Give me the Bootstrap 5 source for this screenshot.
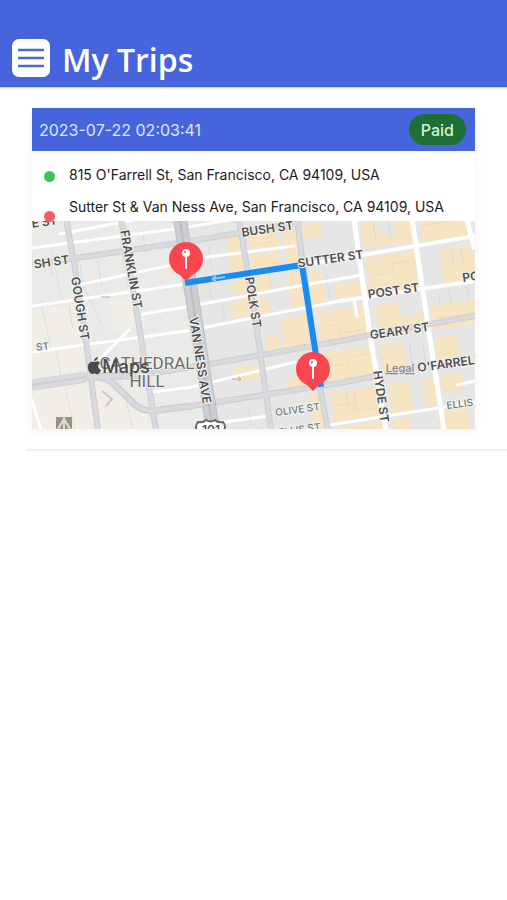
<!DOCTYPE html>
<html lang="en">
<head>
<meta charset="utf-8">
<meta name="viewport" content="width=device-width, initial-scale=1">
<title>My Trips</title>
<link href="https://cdn.jsdelivr.net/npm/bootstrap@5.3.0/dist/css/bootstrap.min.css" rel="stylesheet">
<style>
  body { font-family: Inter, "Liberation Sans", sans-serif; background: #fff; color: #1c1c1e; }
  .app-bar { background: #4664dc; padding: 36px 12px 7px; box-shadow: 0 1px 1px rgba(70,100,220,.3); }
  .app-title { font-family: "Open Sans", "Noto Sans", sans-serif; font-weight: 600; font-size: 32px; line-height: 44px; color: #fff; padding-left: 12px; padding-top: 2px; height: 44px; }
  .menu-btn { width: 38px; height: 38px; border-radius: 7px; background: #fff; }
  .trip { margin: 21px 32px 20px; border-radius: 0; box-shadow: 0 2px 10px rgba(0,0,0,.05); }
  .trip-head { background: #4664dc; color: #dfe7ff; font-size: 16px; height: 43px; padding: 0 9px 0 7px; }
  .paid { background: #1f6e35; color: #d4f3d8; font-size: 16px; font-weight: 500; line-height: 24px; padding: 4px 12px 3px; }
  .stops { font-size: 14px; line-height: 16px; height: 70px; padding: 16px 12px 0; }
  .stop { gap: 14px; height: 32px; }
  .dot { width: 11px; height: 11px; margin-top: 4px; }
  .dot-from { background: #3cc45c; }
  .dot-to { background: #f4605f; margin-top: 12px; }
  .trip-map { aspect-ratio: 443 / 208; }
  .trip-map text { font-family: Inter, "Liberation Sans", sans-serif; text-anchor: middle; fill: #505052; font-size: 12px; font-weight: 600; }
  .halo text { stroke: #f3f2ef; stroke-width: 2px; paint-order: stroke; }
  .trip-map text.minor { font-size: 10px; font-weight: 500; fill: #77777a; }
  .trip-map text.area { font-size: 17px; font-weight: 400; fill: #6b6b6d; font-family: Roboto, sans-serif; }
  .trip-map text.brand { font-size: 18px; font-weight: 500; fill: #4a4a4c; }
  .trip-map text.legal { font-size: 11px; font-weight: 500; fill: #858588; text-decoration: underline; }
  .trip-rule { margin: 0 0 0 26px; border-top: 2px solid #f0f0f1; opacity: 1; }
</style>
<script src="https://cdn.jsdelivr.net/npm/bootstrap@5.3.0/dist/js/bootstrap.bundle.min.js"></script>
</head>
<body>
<header class="app-bar d-flex align-items-center">
  <button type="button" class="menu-btn btn border-0 p-0 d-flex align-items-center justify-content-center" aria-label="Menu">
    <svg width="26" height="20" viewBox="0 0 26 20" stroke="#4a69c8" stroke-width="2.4" aria-hidden="true"><path d="M0 2h26M0 10h26M0 18h26"/></svg>
  </button>
  <h1 class="app-title mb-0">My Trips</h1>
</header>
<main>
  <article class="trip card border-0">
    <div class="trip-head d-flex align-items-center justify-content-between">
      <time datetime="2023-07-22T02:03:41">2023-07-22 02:03:41</time>
      <span class="paid rounded-pill">Paid</span>
    </div>
    <div class="stops">
      <div class="stop d-flex align-items-start"><span class="dot dot-from rounded-circle flex-shrink-0"></span><span>815 O'Farrell St, San Francisco, CA 94109, USA</span></div>
      <div class="stop d-flex align-items-start"><span class="dot dot-to rounded-circle flex-shrink-0 position-relative z-1"></span><span>Sutter St &amp; Van Ness Ave, San Francisco, CA 94109, USA</span></div>
    </div>
    <svg class="trip-map w-100 d-block" viewBox="32 221 443 208" preserveAspectRatio="xMidYMid slice" role="img" aria-label="Trip route map">
      <rect x="32" y="221" width="443" height="208" fill="#e6e6e7"/>
      <path d="M32 221H180L212 430H32z" fill="#eaeae9"/>
      <path d="M32 310l50-8 12 70-62 10zM110 300l30-4 6 30-32 5zM32 388l60-8 30 10 22 22 12 18H32z" fill="#f0eee6"/>
      <!-- building blocks, laid out on the street grid -->
      <g transform="matrix(1 -.145 .155 1 240 221)" fill="#f6e4c3">
        <path d="M-76 27h16v15h-16zM-67 47h16v14h-16zM-16 14h16v35h-16zM5 15h30v15H5zM5 35h28v15H5zM-18 57h16v15h-16zM-22 78h18v16h-18zM5 57h16v15H5zM5 78h12v16H5zM38 57h16v37H38zM24 -5h25v12H24zM40 14h14v35H40z"/>
        <path d="M60 13h18v14H60zM60 60h12v32H60zM82 76h29v17H82zM62 100h49v34H62zM24 102h30v32H24zM8 116h12v17H8zM-28 143h26v15h-26zM36 139h18v14H36zM22 160h32v12H22zM62 141h46v30H62zM40 181h15v28H40z"/>
        <path d="M118 17h16v28h-16zM117 33h50v12h-50zM151 16h17v28h-17zM176 17h48v32h-48zM117 54h51v38h-51zM190 56h34v36h-34zM119 102h24v31h-24zM145 116h20v16h-20zM174 110h60v24h-60zM62 181h47v29H62zM118 142h24v25h-24zM119 182h22v30h-22zM172 142h22v24h-22zM172 180h22v16h-22zM154 181h12v28h-12zM62 216h46v15H62zM119 216h18v18h-18zM164 214h30v22h-30z"/>
      </g>
      <g transform="matrix(1 -.145 .155 1 240 221)" fill="none" stroke="#d8d8d9" stroke-width="1">
        <path d="M-192 14v13M-163 20v25M-145 19v25M-97 0v22M-110 54v22M-180 59v22M-35 18v24M-40 58v14M-30 79v14M20 58v14M76 56v33M130 19v20M145 18v20M183 96v14M194 96v14M212 96v14M78 183v18M86 183v18M147 144v22M160 144v22M-20 183v18M-48 142v13M202 58v16M212 58v16"/>
        <path stroke="#eddcb7" d="M120 72h22v-9h18M66 115h15v9h24M177 30h38M65 155h20v-7h20M65 194h18v8h20M178 123h40M125 120v12M11 25h18v8"/>
      </g>
      <path d="M82 282l23 51M120 240l8 47M52 250l9 49M40 300l12 51M56 350l5 26M113 342l8 41M65 389l10 40M126 402l7 27" stroke="#dededc" fill="none"/>
      <path d="M102 391l10 8-6 7" stroke="#c9c9c6" stroke-width="2" fill="none"/>
      <!-- side streets -->
      <g fill="none" stroke="#fff" stroke-width="3" stroke-linecap="square">
        <path d="M32 248L182 228L235 219M32 306L186 284M32 352L186 331L340 301M32 400l9 30"/>
        <path stroke-width="4" d="M303 265L475 236M340 301L475 281"/>
        <path d="M74 286L172 265M200 258L294 246M143 314L186 307L304 285M304 285L362 275M153 392L192 387L295 362M217 423L268 416M60 234L175 212M101 358l28-28M144 414L210 404M457 385l18-4M330 425L444 407L475 402"/>
        <path stroke-width="5" d="M354 219L370 335L386 430M412 219L429 332L444 430M467 219l7 28"/>
        <path d="M357 316l-3-16"/>
      </g>
      <!-- main streets -->
      <g fill="none" stroke="#cdced2">
        <path stroke-width="6" d="M66 219L74 262L85 334L98 430M121 219L140 332L156 430M239 219L257 330L271 430M297 219L303 265L320 388L328 430"/>
        <path stroke-width="6" d="M32 264L76 258L186 242L302 222M136 376L210 364L340 341L370 335L475 316M186 407L340 383L376 376"/>
        <path stroke-width="11" d="M32 385L86 377"/>
        <path stroke-width="7" d="M86 377C112 375 112 384 122 392S135 410 152 411L190 406M90 376L138 376"/>
      </g>
      <g fill="none" stroke="#d9dade" stroke-width="4">
        <path d="M66 219L74 262L85 334L98 430M121 219L140 332L156 430M239 219L257 330L271 430M297 219L303 265L320 388L328 430M32 264L76 258L186 242L302 222M136 376L210 364L340 341L370 335L475 316M186 407L340 383L376 376M86 377C112 375 112 384 122 392S135 410 152 411L190 406M90 376L138 376"/>
        <path d="M32 382L86 374M32 388L86 380"/>
      </g>
      <path d="M180 219L190 284L213 430" fill="none" stroke="#bfc0c4" stroke-width="14"/>
      <path d="M180 219L190 284L213 430" fill="none" stroke="#cdced2" stroke-width="12"/>
      <path d="M180 219L190 284L213 430" fill="none" stroke="#bdbec3" stroke-width="2"/>
      <path d="M56 417h16v12H56z" fill="#98938a"/>
      <path d="M58 429l6-10 6 10M64 416v13" fill="none" stroke="#e2dfd4" stroke-width="2"/>
      <path d="M101 297h9M232 379h9m-3-3l3 3-3 2" stroke="#aaa" fill="none"/>
      <!-- highway shield -->
      <path d="M198 432q-4-5 0-10 5 1 8-2 5 3 9 0 3 3 8 2 4 5 0 10z" fill="#fff" stroke="#66666a" stroke-width="2"/>
      <text x="211" y="434" font-size="10">101</text>
      <!-- route -->
      <path d="M185 283L302 265L321 387" fill="none" stroke="#188cf2" stroke-width="6" stroke-linejoin="miter"/>
      <path d="M212 279l13-2m-13 2l4-3m-4 3l4 2" fill="none" stroke="#8ec8fa" stroke-width="2"/>
      <g class="halo">
        <text transform="translate(45 226) rotate(-8)">E ST</text>
        <text transform="translate(52 266) rotate(-8)">SH ST</text>
        <text transform="translate(268 233) rotate(-8)">BUSH ST</text>
        <text transform="translate(331 263) rotate(-8)">SUTTER ST</text>
        <text transform="translate(394 295) rotate(-8)">POST ST</text>
        <text transform="translate(400 335) rotate(-8)">GEARY ST</text>
        <text transform="translate(418 372) rotate(-8)" style="text-anchor:start">O'FARRELL ST</text>
        <text transform="translate(463 282) rotate(-8)" style="text-anchor:start">POST</text>
        <text transform="translate(76 309) rotate(81)">GOUGH ST</text>
        <text transform="translate(127 270) rotate(80)">FRANKLIN ST</text>
        <text transform="translate(249 303) rotate(81)">POLK ST</text>
        <text transform="translate(196 361) rotate(81)">VAN NESS AVE</text>
        <text transform="translate(377 397) rotate(82)">HYDE ST</text>
        <text class="minor" transform="translate(43 350) rotate(-6)">ST</text>
        <text class="minor" transform="translate(298 413) rotate(-8)">OLIVE ST</text>
        <text class="minor" transform="translate(300 433) rotate(-8)">ELLIS ST</text>
        <text class="minor" transform="translate(447 409) rotate(-7)" style="text-anchor:start">ELLIS ST</text>
        <text class="area" x="147" y="369">CATHEDRAL</text>
        <text class="area" x="147" y="387">HILL</text>
      </g>
      <text class="brand" x="126" y="373">Maps</text>
      <path d="M95 362c2-1 4-1 5 1-3 2-2 6 1 7-1 3-3 5-5 4-1-1-2-1-3 0-3 1-6-5-5-9 1-3 4-4 7-3zM94 361c0-2 2-4 4-4 0 2-2 4-4 4z" fill="#4a4a4c"/>
      <a href="#legal"><text class="legal" x="400" y="372">Legal</text></a>
      <defs>
        <g id="pin">
          <path d="M-9 13L0 22L9 13z" fill="#f0444c"/>
          <circle r="17" fill="#fb4650"/>
          <path d="M0-4V9" stroke="#fff" stroke-width="2" stroke-linecap="round"/>
          <circle cy="-6" r="4" fill="#fff"/><circle cx="-1" cy="-7" r="1" fill="#fb4650"/>
        </g>
      </defs>
      <use href="#pin" x="186" y="259"/>
      <use href="#pin" x="313" y="369"/>
    </svg>
  </article>
  <hr class="trip-rule">
</main>
</body>
</html>
